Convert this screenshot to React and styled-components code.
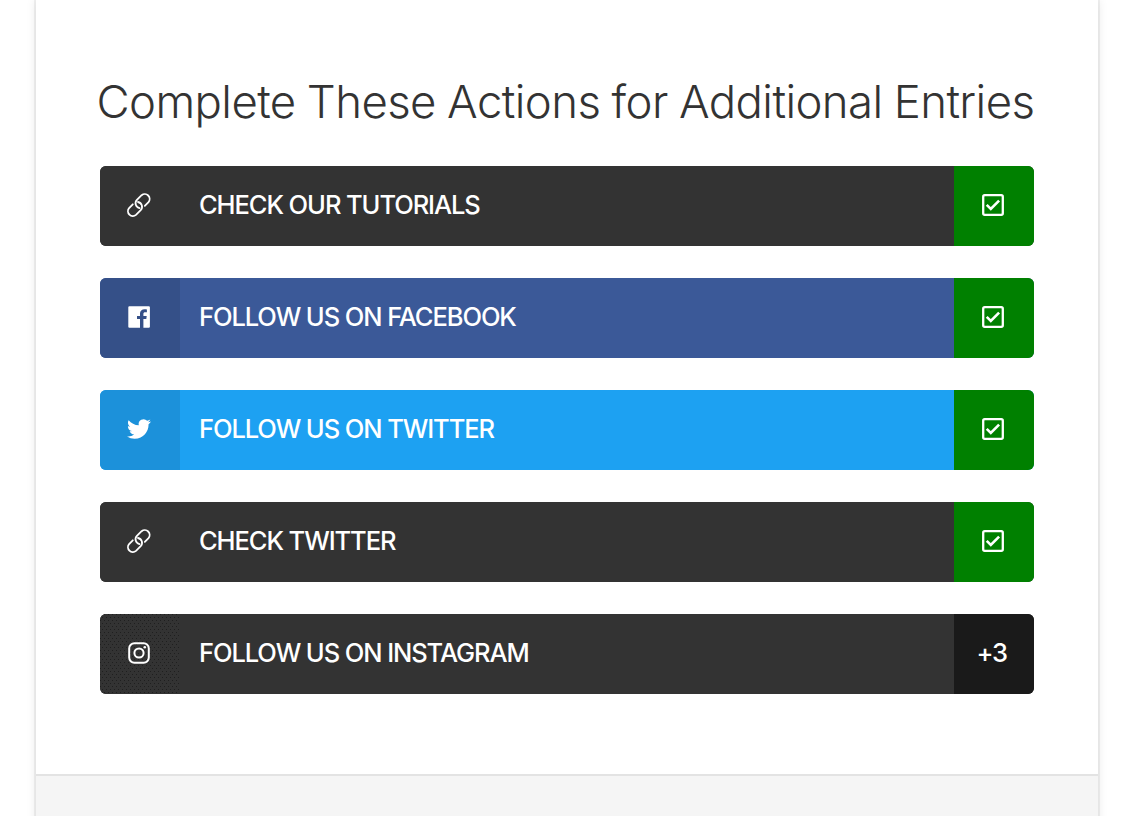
import React from "react";
import styled, { createGlobalStyle } from "styled-components";

const GlobalStyle = createGlobalStyle`
  * { box-sizing: border-box; }
  body { margin: 0; background: #fff; overflow: hidden; font-family: Inter, "Open Sans", sans-serif; }
`;

const Page = styled.div`
  height: 816px;
  padding: 0 34px 0 36px;
  overflow: hidden;
`;

const Card = styled.main`
  height: 840px;
  display: flex;
  flex-direction: column;
  background: #fff;
  box-shadow: 0 0 0 2px rgba(0, 0, 0, 0.05), 0 0 10px rgba(0, 0, 0, 0.1);
`;

const Body = styled.section`
  height: 774px;
  padding: 72px 64px 0;
`;

const Footer = styled.footer`
  flex: 1;
  border-top: 2px solid #e3e3e3;
  background: #f5f5f5;
`;

const Title = styled.h1`
  margin: 0 -10px 34px -3.5px;
  height: 60px;
  line-height: 60px;
  font-size: 45.5px;
  font-weight: 300;
  letter-spacing: -0.58px;
  word-spacing: -1px;
  white-space: nowrap;
  color: #333;
`;

const List = styled.div`
  display: flex;
  flex-direction: column;
  gap: 32px;
`;

const Row = styled.button`
  display: flex;
  align-items: stretch;
  width: 934px;
  height: 80px;
  padding: 0;
  border: 0;
  border-radius: 6px;
  overflow: hidden;
  color: #fff;
  background: ${(p) => p.$color};
  font: inherit;
  text-align: left;
`;

const IconCell = styled.span`
  display: flex;
  align-items: center;
  justify-content: center;
  width: 80px;
  padding: 0 2px 2px 0;
  background-color: ${(p) => p.$color};
  ${(p) =>
    p.$dotted &&
    `background-image: radial-gradient(circle at 0.5px 0.5px, #1f1f1f 0.5px, transparent 0.6px), radial-gradient(circle at 0.5px 0.5px, #1f1f1f 0.5px, transparent 0.6px);
     background-size: 4px 6px;
     background-position: 0 0, 2px 3px;`}
`;

const Label = styled.span`
  flex: 1;
  padding-left: 19px;
  line-height: 78px;
  font-size: 25.5px;
  font-weight: 550;
  letter-spacing: -1.08px;
  white-space: nowrap;
`;

const Status = styled.span`
  display: flex;
  align-items: center;
  justify-content: center;
  width: 80px;
  padding: 0 2px 2px 0;
  background: ${(p) => (p.$done ? "#008000" : "#1a1a1a")};
`;

const Points = styled.span`
  padding: 0 3px 2px 0;
  font-size: 25.5px;
  font-weight: 550;
  letter-spacing: -1.5px;
`;

const Icon = styled.svg`
  display: block;
  width: 26px;
  height: 26px;
`;

const LinkIcon = () => (
  <Icon viewBox="0 0 26 26" fill="none" stroke="#fff" strokeWidth="1.8" strokeLinecap="round">
    <path d="M18.8 13.8L22.5 10.1A4.9 4.9 0 0 0 15.6 3.2L10.9 7.9A4.9 4.9 0 0 0 13.6 16.1" />
    <path
      transform="rotate(180 12.8 13.05)"
      d="M18.8 13.8L22.5 10.1A4.9 4.9 0 0 0 15.6 3.2L10.9 7.9A4.9 4.9 0 0 0 13.6 16.1"
    />
  </Icon>
);

const FacebookIcon = () => (
  <Icon viewBox="0 0 26 26">
    <path
      fill="#fff"
      d="M3.4 2.2H22.8Q23.9 2.2 23.9 3.3V22.7Q23.9 23.8 22.8 23.8H17.4V15.1H20.3L20.7 12H17.4V10C17.4 8.9 17.9 8.3 19.2 8.3H20.9V5.4C20.5 5.3 19.6 5.2 18.6 5.2C15.8 5.2 14 6.8 14 9.6V12H11V15.1H14V23.8H3.4Q2.3 23.8 2.3 22.7V3.3Q2.3 2.2 3.4 2.2Z"
    />
  </Icon>
);

const TwitterIcon = () => (
  <Icon viewBox="-1 -1 26 26">
    <path
      fill="#fff"
      d="M23.953 4.57a10 10 0 01-2.825.775 4.958 4.958 0 002.163-2.723c-.951.555-2.005.959-3.127 1.184a4.92 4.92 0 00-8.384 4.482C7.69 8.095 4.067 6.13 1.64 3.162a4.822 4.822 0 00-.666 2.475c0 1.71.87 3.213 2.188 4.096a4.904 4.904 0 01-2.228-.616v.06a4.923 4.923 0 003.946 4.827 4.996 4.996 0 01-2.212.085 4.936 4.936 0 004.604 3.417 9.867 9.867 0 01-6.102 2.105c-.39 0-.779-.023-1.17-.067a13.995 13.995 0 007.557 2.209c9.053 0 13.998-7.496 13.998-13.985 0-.21 0-.42-.015-.63A9.935 9.935 0 0024 4.59z"
    />
  </Icon>
);

const InstagramIcon = () => (
  <Icon viewBox="0 0 26 26" fill="none" stroke="#fff" strokeWidth="2">
    <rect x="3.2" y="3.2" width="19.6" height="19.6" rx="5.2" />
    <circle cx="13" cy="13" r="4.6" />
    <circle cx="18.8" cy="7.2" r="1.3" fill="#fff" stroke="none" />
  </Icon>
);

const CheckIcon = () => (
  <Icon viewBox="0 0 26 26" fill="none" stroke="#fff">
    <rect x="3.2" y="3.2" width="19.6" height="19.6" rx="1.5" strokeWidth="2.3" />
    <path d="M6.7 12.9L10.8 17L19.1 8.6" strokeWidth="2.6" />
  </Icon>
);

const actions = [
  { label: "CHECK OUR TUTORIALS", color: "#333", cell: "#333", Glyph: LinkIcon, done: true },
  { label: "FOLLOW US ON FACEBOOK", color: "#3b5998", cell: "#355088", Glyph: FacebookIcon, done: true },
  { label: "FOLLOW US ON TWITTER", color: "#1da1f2", cell: "#1c91da", Glyph: TwitterIcon, done: true },
  { label: "CHECK TWITTER", color: "#333", cell: "#333", Glyph: LinkIcon, done: true },
  { label: "FOLLOW US ON INSTAGRAM", color: "#333", cell: "#333", Glyph: InstagramIcon, dotted: true },
];

export default function App() {
  return (
    <Page>
      <GlobalStyle />
      <Card>
        <Body>
          <Title>Complete These Actions for Additional Entries</Title>
          <List>
            {actions.map(({ label, color, cell, Glyph, done, dotted }) => (
              <Row key={label} type="button" $color={color}>
                <IconCell $color={cell} $dotted={dotted}>
                  <Glyph />
                </IconCell>
                <Label>{label}</Label>
                <Status $done={done}>{done ? <CheckIcon /> : <Points>+3</Points>}</Status>
              </Row>
            ))}
          </List>
        </Body>
        <Footer />
      </Card>
    </Page>
  );
}
